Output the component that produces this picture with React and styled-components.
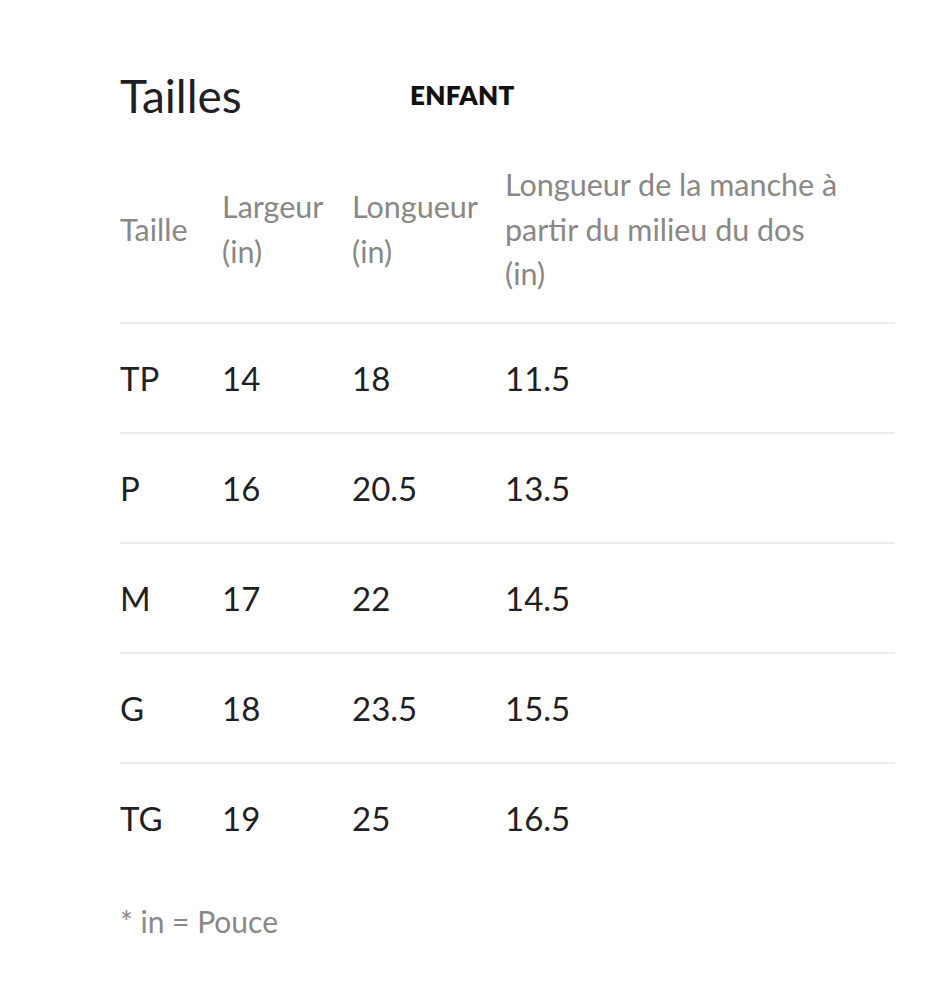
import styled, { createGlobalStyle } from "styled-components";

const GlobalStyle = createGlobalStyle`
    body {
        margin: 0;
        background: #ffffff;
        font-family: 'Lato', 'Noto Sans', sans-serif;
    }
`;

const rows = [
    ["TP", "14", "18", "11.5"],
    ["P", "16", "20.5", "13.5"],
    ["M", "17", "22", "14.5"],
    ["G", "18", "23.5", "15.5"],
    ["TG", "19", "25", "16.5"],
];

const App = () => {
    return (
        <Page>
            <GlobalStyle />
            <TitleBar>
                <Title>Tailles</Title>
                <Tab>ENFANT</Tab>
            </TitleBar>

            <Table>
                <thead>
                    <tr>
                        <Th $width={102}>Taille</Th>
                        <Th $width={130}>Largeur<br />(in)</Th>
                        <Th $width={153}>Longueur<br />(in)</Th>
                        <Th>Longueur de la manche à<br />partir du milieu du dos<br />(in)</Th>
                    </tr>
                </thead>
                <tbody>
                    {rows.map((row) => (
                        <Tr key={row[0]}>
                            {row.map((cell, i) => (
                                <Td key={i}>{cell}</Td>
                            ))}
                        </Tr>
                    ))}
                </tbody>
            </Table>

            <Note>* in = Pouce</Note>
        </Page>
    );
};

export default App;

const Page = styled.div`
    padding: 70px 51px 60px 120px;
    width: 775px;
`;

const TitleBar = styled.div`
    display: flex;
    align-items: center;
    height: 50px;
`;

const Title = styled.h1`
    margin: 0;
    width: 290px;
    font-size: 46px;
    font-weight: 400;
    color: #1f1f24;
`;

const Tab = styled.span`
    font-size: 26px;
    font-weight: 800;
    color: #111;
    letter-spacing: 0.3px;
`;

const Table = styled.table`
    width: 100%;
    border-collapse: collapse;
    margin-top: 16px;
`;

const Th = styled.th`
    width: ${(p) => (p.$width ? `${p.$width}px` : "auto")};
    padding: 26px 0;
    text-align: left;
    vertical-align: middle;
    font-size: 30.5px;
    font-weight: 400;
    line-height: 44.5px;
    color: #8a8785;
    border-bottom: 2px solid #ececec;
    white-space: nowrap;
`;

const Tr = styled.tr`
    &:not(:last-child) td {
        border-bottom: 2px solid #ececec;
    }
`;

const Td = styled.td`
    height: 108px;
    padding: 0;
    text-align: left;
    vertical-align: middle;
    font-size: 33px;
    color: #1f1f24;
`;

const Note = styled.p`
    margin: 31px 0 0;
    font-size: 30px;
    color: #8a8785;
`;
